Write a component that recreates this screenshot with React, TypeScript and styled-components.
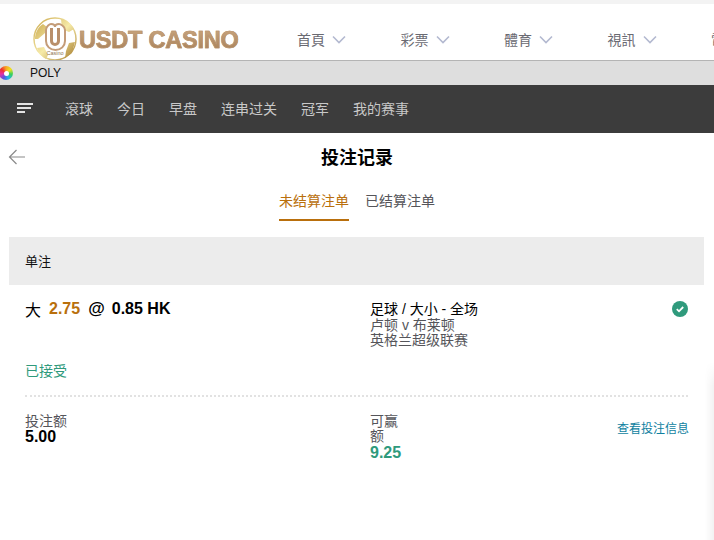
import React from "react";
import styled, { createGlobalStyle } from "styled-components";

const GlobalStyle = createGlobalStyle`
  html, body {
    margin: 0;
    padding: 0;
    background: #fff;
    overflow: hidden;
  }
  body {
    font-family: "Liberation Sans", "Noto Sans CJK SC", sans-serif;
  }
`;

const Page = styled.div`
  width: 714px;
  height: 540px;
  overflow: hidden;
  position: relative;
`;

const TopStrip = styled.div`
  height: 4px;
  background: #f3f3f3;
`;

const SiteHeader = styled.header`
  height: 56px;
  background: #fff;
  border-bottom: 1px solid #b4b4b4;
  display: flex;
  align-items: flex-end;
  padding-left: 33px;
  overflow: hidden;
`;

const Logo = styled.div`
  display: flex;
  align-items: center;
  width: 264px;
  flex: none;
  height: 45px;
  margin-bottom: -1px;
`;

const LogoText = styled.span`
  font-size: 23.5px;
  font-weight: 700;
  letter-spacing: -0.2px;
  white-space: nowrap;
  margin-left: 2px;
  margin-top: 4px;
  -webkit-text-stroke: 0.6px #b8926c;
  background: linear-gradient(#cba77f, #a47d56);
  -webkit-background-clip: text;
  background-clip: text;
  color: transparent;
`;

const SiteNav = styled.nav`
  display: flex;
  height: 40px;
  align-items: center;
  margin-bottom: 1px;
`;

const SiteNavItem = styled.div`
  width: 103.5px;
  flex: none;
  display: flex;
  align-items: center;
  gap: 7px;
  font-size: 14px;
  color: #6a6a72;
  white-space: nowrap;
`;

const PolyBar = styled.div`
  height: 24px;
  background: #dedede;
  display: flex;
  align-items: center;
  position: relative;
  padding-left: 30px;
  font-size: 12px;
  color: #111;
`;

const PolyIcon = styled.div`
  position: absolute;
  left: -1px;
  top: 5px;
  width: 14px;
  height: 14px;
  border-radius: 50%;
  background: conic-gradient(#f5a623, #f0e020, #3ad05a, #22b5e8, #5a50e0, #e830a0, #f03030, #f5a623);
  display: flex;
  align-items: center;
  justify-content: center;

  &::after {
    content: "";
    width: 5px;
    height: 5px;
    border-radius: 50%;
    background: #fff;
  }
`;

const MainNav = styled.nav`
  height: 48px;
  background: #3c3c3c;
  display: flex;
  align-items: center;
  padding: 0 0 2px 17px;
  box-sizing: border-box;
`;

const MenuIcon = styled.div`
  width: 16px;
  display: flex;
  flex-direction: column;
  gap: 2px;
  margin-right: 32px;
`;

const MenuLine = styled.span<{ $w: number }>`
  display: block;
  height: 2px;
  background: #e4e4e4;
  width: ${(p) => p.$w}px;
`;

const MainNavItem = styled.span`
  font-size: 14px;
  color: #c8c8c8;
  margin-right: 24px;
  white-space: nowrap;
`;

const TitleRow = styled.div`
  height: 50px;
  box-sizing: border-box;
  padding-bottom: 5px;
  display: flex;
  align-items: center;
  justify-content: center;
  position: relative;
`;

const BackIcon = styled.svg`
  position: absolute;
  left: 8px;
  top: 16px;
`;

const Title = styled.h1`
  margin: 0;
  font-size: 18px;
  font-weight: 700;
  color: #000;
`;

const Tabs = styled.div`
  display: flex;
  justify-content: center;
  gap: 16px;
  height: 38px;
`;

const Tab = styled.div<{ $active?: boolean }>`
  font-size: 14px;
  line-height: 36px;
  height: 38px;
  box-sizing: border-box;
  color: ${(p) => (p.$active ? "#b96f0c" : "#55555a")};
  border-bottom: 2px solid ${(p) => (p.$active ? "#b96f0c" : "transparent")};
`;

const Section = styled.section`
  margin: 16px 10px 0 9px;
`;

const SectionHead = styled.div`
  height: 48px;
  box-sizing: border-box;
  padding: 0 0 2px 16px;
  background: #ececec;
  display: flex;
  align-items: center;
  font-size: 13px;
  color: #111;
`;

const BetBody = styled.div`
  padding: 0 16px;
`;

const BetRow = styled.div`
  display: flex;
  padding-top: 14px;
  height: 54px;
`;

const LeftCol = styled.div`
  width: 345px;
  flex: none;
`;

const RightCol = styled.div`
  flex: 1;
  min-width: 0;
`;

const Selection = styled.div`
  display: flex;
  align-items: center;
  font-size: 16px;
  font-weight: 700;
  color: #000;
  height: 19px;
  white-space: nowrap;
`;

const SelName = styled.span`
  font-weight: 400;
  font-size: 16px;
  margin-right: 8px;
`;

const SelLine = styled.span`
  color: #b96f0c;
  margin-right: 8px;
`;

const SelAt = styled.span`
  margin-right: 7px;
  font-size: 17px;
`;

const Market = styled.div`
  font-size: 14px;
  font-weight: 400;
  line-height: 17px;
  color: #000;
  padding-top: 2px;
`;

const MatchLine = styled.div`
  font-size: 14px;
  line-height: 15px;
  color: #55555a;
`;

const CheckIcon = styled.svg`
  flex: none;
  margin-top: 2px;
`;

const Accepted = styled.div`
  font-size: 14px;
  line-height: 16px;
  color: #2f9a7c;
  height: 32px;
  margin-top: 10px;
  border-bottom: 2px dotted #e2e2e2;
`;

const FooterRow = styled.div`
  display: flex;
  padding-top: 17px;
`;

const Label = styled.div`
  font-size: 14px;
  line-height: 15px;
  color: #55555a;
`;

const NarrowLabel = styled(Label)`
  width: 30px;
  margin-bottom: 1px;
`;

const Amount = styled.div<{ $green?: boolean }>`
  font-size: 16px;
  font-weight: 700;
  line-height: 16px;
  color: ${(p) => (p.$green ? "#2f9a7c" : "#000")};
`;

const InfoLink = styled.a`
  font-size: 12px;
  line-height: 16px;
  color: #0f7f9f;
  white-space: nowrap;
  margin: 7px -1px 0 0;
`;

const EdgeShade = styled.div`
  position: absolute;
  right: 0;
  top: 362px;
  bottom: 0;
  width: 9px;
  background: linear-gradient(to right, rgba(0, 0, 0, 0), rgba(0, 0, 0, 0.05));
  mask-image: linear-gradient(to bottom, transparent, #000 24px);
`;

const siteNav = ["首頁", "彩票", "體育", "視訊", "電子"];
const mainNav = ["滾球", "今日", "早盘", "连串过关", "冠军", "我的赛事"];

function Chevron() {
  return (
    <svg width="14" height="9" viewBox="0 0 14 9" fill="none">
      <path d="M1 1.5 7 7.5 13 1.5" stroke="#b3b9d0" strokeWidth="1.6" />
    </svg>
  );
}

function LogoMark() {
  return (
    <svg width="44" height="44" viewBox="0 0 44 44" fill="none">
      <defs>
        <linearGradient id="ring" x1="0" y1="0" x2="1" y2="1">
          <stop offset="0" stopColor="#c9a64a" />
          <stop offset="0.5" stopColor="#f6eaa8" />
          <stop offset="1" stopColor="#a87f2e" />
        </linearGradient>
      </defs>
      <circle cx="22" cy="22" r="21" fill="#fff" stroke="url(#ring)" strokeWidth="1.4" />
      <path d="M2 22c0-6 3-12 8-15l4 3-2 6-7 6zM28 2c6 1 10 5 13 10l-5 3-7-3zM4 31l7-1 4 8-2 4c-4-2-7-6-9-11zM42 25l-3 11-7 5 1-7 3-8z" fill="url(#ring)" />
      <path
        d="M13 13c0-4 4-6 5-6 2 0 4 1 4 3 0-2 2-3 4-3 1 0 6 2 6 6v11c0 5-4 9-9.500 9S13 29 13 24z"
        fill="#fff"
        stroke="#c49c78"
        strokeWidth="2"
      />
      <path d="M17 11v13a5 5 0 0 0 10 0V11h-3v13a2 2 0 0 1-4 0V11z" fill="#b98f6a" />
      <text x="22" y="38" textAnchor="middle" fontSize="5.500" fill="#8f7350" fontFamily="Liberation Sans">
        Casino
      </text>
    </svg>
  );
}

export default function App() {
  return (
    <Page>
      <GlobalStyle />
      <TopStrip />
      <SiteHeader>
        <Logo>
          <LogoMark />
          <LogoText>USDT CASINO</LogoText>
        </Logo>
        <SiteNav>
          {siteNav.map((item) => (
            <SiteNavItem key={item}>
              {item}
              <Chevron />
            </SiteNavItem>
          ))}
        </SiteNav>
      </SiteHeader>
      <PolyBar>
        <PolyIcon />
        POLY
      </PolyBar>
      <MainNav>
        <MenuIcon>
          <MenuLine $w={16} />
          <MenuLine $w={14} />
          <MenuLine $w={8} />
        </MenuIcon>
        {mainNav.map((item) => (
          <MainNavItem key={item}>{item}</MainNavItem>
        ))}
      </MainNav>
      <TitleRow>
        <BackIcon width="18" height="16" viewBox="0 0 18 16" fill="none">
          <path d="M17 8H1.500M8.500 1 1.500 8l7 7" stroke="#8a8a8a" strokeWidth="1.2" />
        </BackIcon>
        <Title>投注记录</Title>
      </TitleRow>
      <Tabs>
        <Tab $active>未结算注单</Tab>
        <Tab>已结算注单</Tab>
      </Tabs>
      <Section>
        <SectionHead>单注</SectionHead>
        <BetBody>
          <BetRow>
            <LeftCol>
              <Selection>
                <SelName>大</SelName>
                <SelLine>2.75</SelLine>
                <SelAt>@</SelAt>
                0.85 HK
              </Selection>
            </LeftCol>
            <RightCol>
              <Market>足球 / 大小 - 全场</Market>
              <MatchLine>卢顿 v 布莱顿</MatchLine>
              <MatchLine>英格兰超级联赛</MatchLine>
            </RightCol>
            <CheckIcon width="16" height="16" viewBox="0 0 16 16">
              <circle cx="8" cy="8" r="8" fill="#2f9a7c" />
              <path d="M4.800 8.200 7 10.300 11.200 6" stroke="#fff" strokeWidth="1.800" fill="none" />
            </CheckIcon>
          </BetRow>
          <Accepted>已接受</Accepted>
          <FooterRow>
            <LeftCol>
              <Label>投注额</Label>
              <Amount>5.00</Amount>
            </LeftCol>
            <RightCol>
              <NarrowLabel>可赢额</NarrowLabel>
              <Amount $green>9.25</Amount>
            </RightCol>
            <InfoLink>查看投注信息</InfoLink>
          </FooterRow>
        </BetBody>
      </Section>
      <EdgeShade />
    </Page>
  );
}
